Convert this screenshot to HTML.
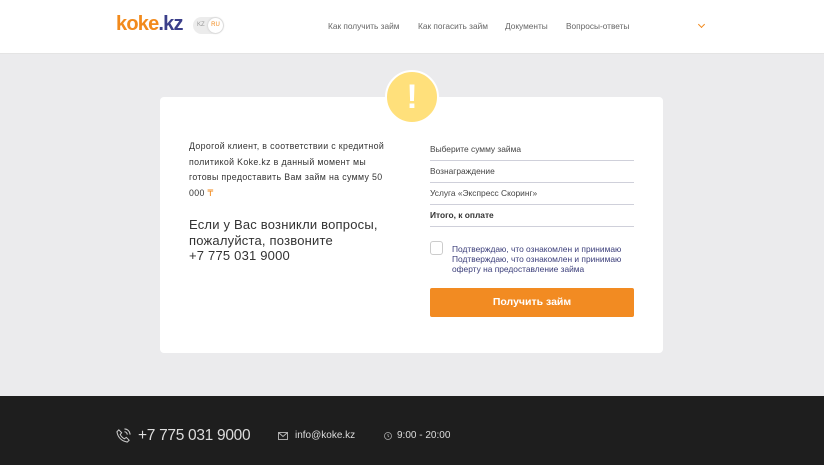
<!DOCTYPE html>
<html><head><meta charset="utf-8"><style>
*{margin:0;padding:0;box-sizing:border-box}
body{width:824px;height:465px;overflow:hidden;font-family:"Liberation Sans",sans-serif;background:#ebebed;position:relative}
.hdr{position:absolute;left:0;top:0;width:824px;height:54px;background:#fff;border-bottom:1px solid #e4e4e4}
.logo{position:absolute;left:116px;top:13px;font-size:20px;font-weight:bold;letter-spacing:-0.8px}
.lang{position:absolute;left:193px;top:17px;width:31px;height:17px;border-radius:9px;background:#ececec;font-size:6px;color:#999}
.lang span{position:absolute;top:5px}
.lang .ru{left:15px;top:1px;width:15px;height:15px;border-radius:50%;background:#fff;color:#f28a1c;text-align:center;line-height:15px;box-shadow:0 0 2px #bbb}
.nav{position:absolute;top:21px;font-size:8.3px;color:#666}
.main{position:absolute;left:0;top:54px;width:824px;height:342px;background:#ebebed}
.card{position:absolute;left:160px;top:97px;width:503px;height:256px;background:#fff;border-radius:4px}
.circ{position:absolute;left:385px;top:70px;width:54px;height:54px;border-radius:50%;background:#ffe07b;border:2px solid #fff;color:#fff;font-size:34px;font-weight:bold;text-align:center;line-height:50px}
.t1{position:absolute;left:189px;top:139px;font-size:8.8px;letter-spacing:0.35px;line-height:15.5px;color:#333;white-space:nowrap}
.t2{position:absolute;left:189px;top:217px;font-size:13px;letter-spacing:0.2px;line-height:15.5px;color:#333}
.row{position:absolute;left:430px;width:204px;border-bottom:1px solid #cfd0da;font-size:8.4px;color:#444;height:22px;padding-top:5px}
.chk{position:absolute;left:430px;top:241px;width:13px;height:14px;border:1px solid #ccc;border-radius:3px}
.ct{position:absolute;left:452px;top:244px;font-size:8.4px;line-height:10px;color:#3b3e7a;white-space:nowrap}
.btn{position:absolute;left:430px;top:288px;width:204px;height:29px;background:#f28b22;border-radius:2px;color:#fff;font-weight:bold;font-size:10.5px;text-align:center;line-height:29px}
.ftr{position:absolute;left:0;top:396px;width:824px;height:69px;background:#1e1e1e;color:#ddd}
</style></head><body>
<div class="hdr">
<div class="logo"><span style="color:#f28a1c">koke</span><span style="color:#3b3f8a">.kz</span></div>
<div class="lang"><span style="left:4px">KZ</span><span class="ru">RU</span></div>
<div class="nav" style="left:328px">Как получить займ</div>
<div class="nav" style="left:418px">Как погасить займ</div>
<div class="nav" style="left:505px">Документы</div>
<div class="nav" style="left:566px">Вопросы-ответы</div>
<div style="position:absolute;left:699px;top:22px;width:5px;height:5px;border-right:1px solid #f28a1c;border-bottom:1px solid #f28a1c;transform:rotate(45deg)"></div>
</div>
<div class="main"></div>
<div class="card"></div>
<div class="circ">!</div>
<div class="t1">Дорогой клиент, в соответствии с кредитной<br>политикой Koke.kz в данный момент мы<br>готовы предоставить Вам займ на сумму 50<br>000 <span style="color:#f28a1c">₸</span></div>
<div class="t2">Если у Вас возникли вопросы,<br>пожалуйста, позвоните<br>+7 775 031 9000</div>
<div class="row" style="top:139px">Выберите сумму займа</div>
<div class="row" style="top:161px">Вознаграждение</div>
<div class="row" style="top:183px">Услуга «Экспресс Скоринг»</div>
<div class="row" style="top:205px;font-weight:bold;color:#333">Итого, к оплате</div>
<div class="chk"></div>
<div class="ct">Подтверждаю, что ознакомлен и принимаю<br>Подтверждаю, что ознакомлен и принимаю<br>оферту на предоставление займа</div>
<div class="btn">Получить займ</div>
<div class="ftr">
<svg style="position:absolute;left:116px;top:32px" width="15" height="15" viewBox="0 0 16 16" fill="none" stroke="#ccc" stroke-width="1.1"><path d="M3 2l3 3-1.5 2c1 2 2.5 3.5 4.5 4.5l2-1.5 3 3-2 2C6 14 2 10 1 4z"/><path d="M9 1a6 6 0 016 6M9 4a3 3 0 013 3"/></svg>
<div style="position:absolute;left:138px;top:31px;font-size:15.5px;letter-spacing:-0.3px">+7 775 031 9000</div>
<svg style="position:absolute;left:278px;top:36px" width="10" height="8" viewBox="0 0 10 8" fill="none" stroke="#bbb" stroke-width="0.9"><rect x="0.5" y="0.5" width="9" height="7"/><path d="M.5 .5l4.5 4 4.5-4"/></svg>
<div style="position:absolute;left:295px;top:34px;font-size:10px">info@koke.kz</div>
<svg style="position:absolute;left:384px;top:36px" width="8" height="8" viewBox="0 0 8 8" fill="none" stroke="#aaa" stroke-width="0.8"><circle cx="4" cy="4" r="3.5"/><path d="M4 2v2l1 1"/></svg>
<div style="position:absolute;left:397px;top:34px;font-size:10px">9:00 - 20:00</div>
</div>
</body></html>
